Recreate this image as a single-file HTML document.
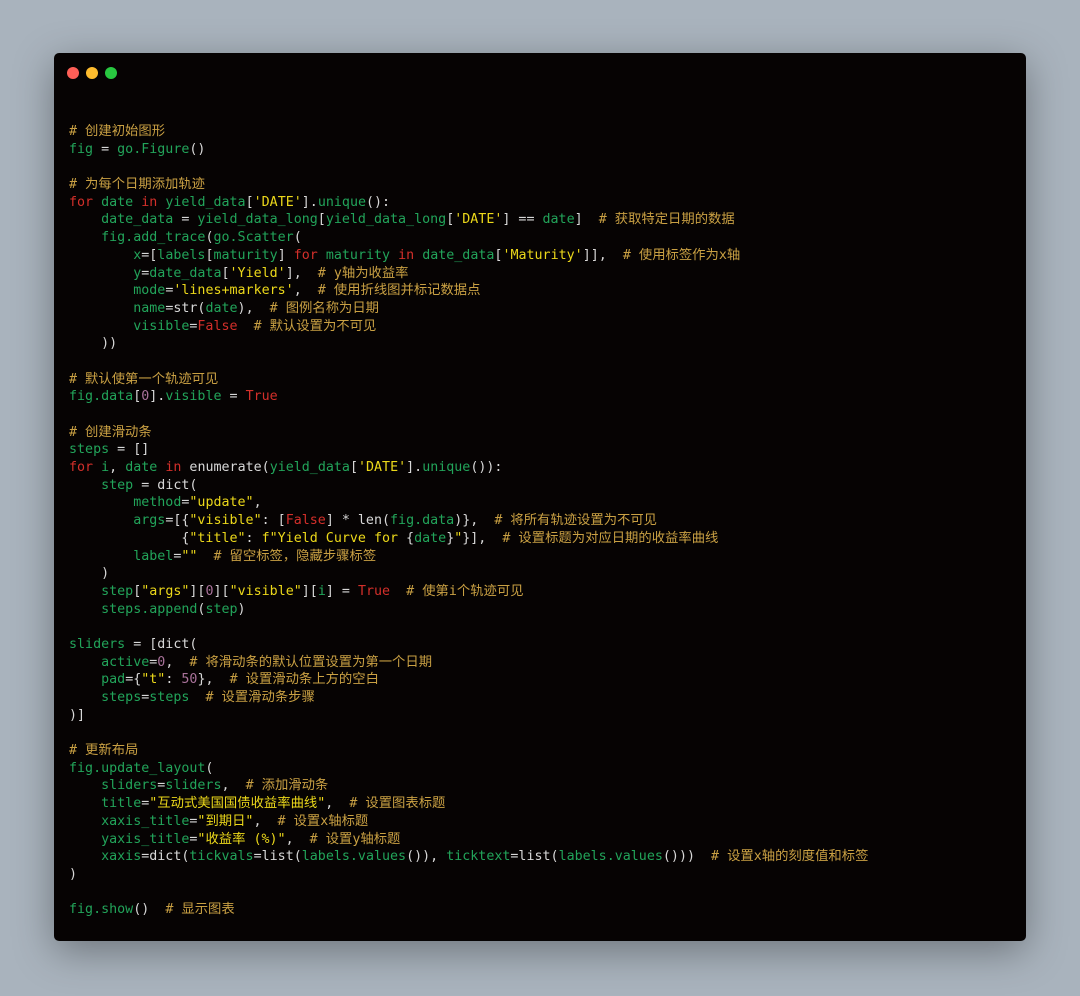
<!DOCTYPE html>
<html><head><meta charset="utf-8"><style>
html,body{margin:0;padding:0;}
body{width:1080px;height:996px;background:#a9b3bd;position:relative;overflow:hidden;}
.win{position:absolute;left:54px;top:53px;width:972px;height:888px;background:#060303;border-radius:5px;box-shadow:0 10px 40px rgba(0,0,0,0.35);}
.dot{position:absolute;top:14px;width:12px;height:12px;border-radius:50%;}
pre{position:absolute;left:15px;top:70px;margin:0;font-family:"DejaVu Sans Mono","Noto Sans CJK SC",monospace;font-size:13.33px;line-height:17.68px;color:#d8d8d8;}
.g{color:#22a45a}.r{color:#d32f2a}.y{color:#ecd81a}.c{color:#c9a043}.p{color:#a9729a}
</style></head><body>
<div class="win">
<div class="dot" style="left:13px;background:#fe5f57"></div>
<div class="dot" style="left:32px;background:#febc2e"></div>
<div class="dot" style="left:51px;background:#28c840"></div>
<pre><span class="c"># 创建初始图形</span>
<span class="g">fig</span> = <span class="g">go.Figure</span>()

<span class="c"># 为每个日期添加轨迹</span>
<span class="r">for</span> <span class="g">date</span> <span class="r">in</span> <span class="g">yield_data</span>[<span class="y">'DATE'</span>].<span class="g">unique</span>():
    <span class="g">date_data</span> = <span class="g">yield_data_long</span>[<span class="g">yield_data_long</span>[<span class="y">'DATE'</span>] == <span class="g">date</span>]  <span class="c"># 获取特定日期的数据</span>
    <span class="g">fig.add_trace</span>(<span class="g">go.Scatter</span>(
        <span class="g">x</span>=[<span class="g">labels</span>[<span class="g">maturity</span>] <span class="r">for</span> <span class="g">maturity</span> <span class="r">in</span> <span class="g">date_data</span>[<span class="y">'Maturity'</span>]],  <span class="c"># 使用标签作为x轴</span>
        <span class="g">y</span>=<span class="g">date_data</span>[<span class="y">'Yield'</span>],  <span class="c"># y轴为收益率</span>
        <span class="g">mode</span>=<span class="y">'lines+markers'</span>,  <span class="c"># 使用折线图并标记数据点</span>
        <span class="g">name</span>=str(<span class="g">date</span>),  <span class="c"># 图例名称为日期</span>
        <span class="g">visible</span>=<span class="r">False</span>  <span class="c"># 默认设置为不可见</span>
    ))

<span class="c"># 默认使第一个轨迹可见</span>
<span class="g">fig.data</span>[<span class="p">0</span>].<span class="g">visible</span> = <span class="r">True</span>

<span class="c"># 创建滑动条</span>
<span class="g">steps</span> = []
<span class="r">for</span> <span class="g">i</span>, <span class="g">date</span> <span class="r">in</span> enumerate(<span class="g">yield_data</span>[<span class="y">'DATE'</span>].<span class="g">unique</span>()):
    <span class="g">step</span> = dict(
        <span class="g">method</span>=<span class="y">"update"</span>,
        <span class="g">args</span>=[{<span class="y">"visible"</span>: [<span class="r">False</span>] * len(<span class="g">fig.data</span>)},  <span class="c"># 将所有轨迹设置为不可见</span>
              {<span class="y">"title"</span>: <span class="y">f"Yield Curve for </span>{<span class="g">date</span>}<span class="y">"</span>}],  <span class="c"># 设置标题为对应日期的收益率曲线</span>
        <span class="g">label</span>=<span class="y">""</span>  <span class="c"># 留空标签，隐藏步骤标签</span>
    )
    <span class="g">step</span>[<span class="y">"args"</span>][<span class="p">0</span>][<span class="y">"visible"</span>][<span class="g">i</span>] = <span class="r">True</span>  <span class="c"># 使第i个轨迹可见</span>
    <span class="g">steps.append</span>(<span class="g">step</span>)

<span class="g">sliders</span> = [dict(
    <span class="g">active</span>=<span class="p">0</span>,  <span class="c"># 将滑动条的默认位置设置为第一个日期</span>
    <span class="g">pad</span>={<span class="y">"t"</span>: <span class="p">50</span>},  <span class="c"># 设置滑动条上方的空白</span>
    <span class="g">steps</span>=<span class="g">steps</span>  <span class="c"># 设置滑动条步骤</span>
)]

<span class="c"># 更新布局</span>
<span class="g">fig.update_layout</span>(
    <span class="g">sliders</span>=<span class="g">sliders</span>,  <span class="c"># 添加滑动条</span>
    <span class="g">title</span>=<span class="y">"互动式美国国债收益率曲线"</span>,  <span class="c"># 设置图表标题</span>
    <span class="g">xaxis_title</span>=<span class="y">"到期日"</span>,  <span class="c"># 设置x轴标题</span>
    <span class="g">yaxis_title</span>=<span class="y">"收益率 (%)"</span>,  <span class="c"># 设置y轴标题</span>
    <span class="g">xaxis</span>=dict(<span class="g">tickvals</span>=list(<span class="g">labels.values</span>()), <span class="g">ticktext</span>=list(<span class="g">labels.values</span>()))  <span class="c"># 设置x轴的刻度值和标签</span>
)

<span class="g">fig.show</span>()  <span class="c"># 显示图表</span></pre>
</div>
</body></html>
